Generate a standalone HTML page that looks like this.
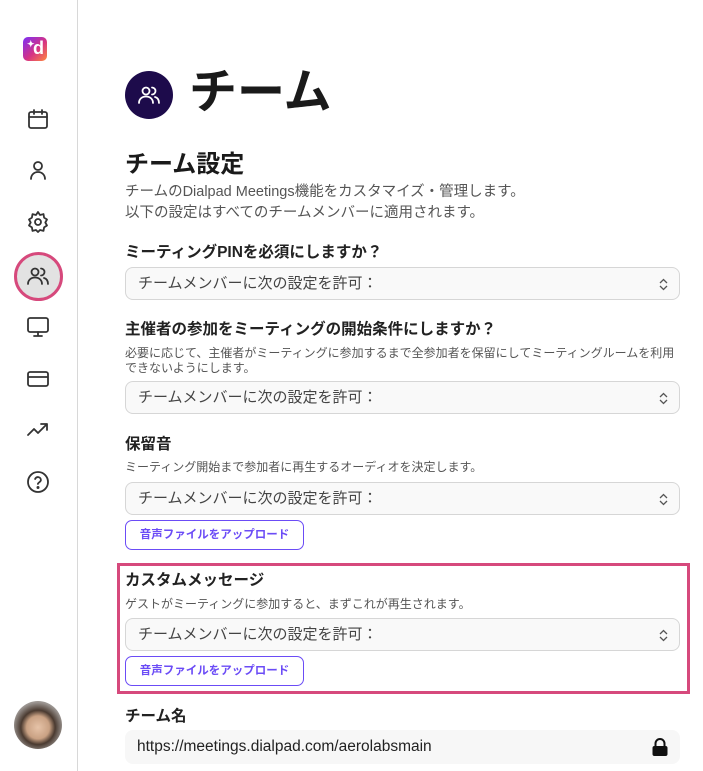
<!DOCTYPE html>
<html><head><meta charset="utf-8"><style>
*{box-sizing:border-box;margin:0;padding:0}
body{width:703px;height:771px;overflow:hidden;background:#fff;font-family:"Liberation Sans","Noto Sans CJK JP",sans-serif;color:#222;position:relative}
.side{position:absolute;left:0;top:0;width:78px;height:771px;border-right:1px solid #d8d8d8;background:#fff}
.ic{position:absolute;left:26px;width:24px;height:24px}
.a{position:absolute;white-space:nowrap}
.lbl{font-size:15.5px;font-weight:bold;color:#222;left:125px}
.ds{font-size:12px;color:#555;left:125px;line-height:15px}
.sel{position:absolute;left:125px;width:555px;height:33px;border:1px solid #d6d6d6;border-radius:8px;background:#f9f9f9;font-size:15px;color:#444;padding-left:12px;line-height:31px}
.chev{position:absolute;right:11px;top:10px}
.btn{position:absolute;left:125px;width:179px;height:30px;border:1px solid #6b4cf6;border-radius:7px;color:#6b4cf6;font-size:11.5px;font-weight:bold;text-align:center;line-height:28px}
</style></head><body>
<div class="side">
  <div style="position:absolute;left:23px;top:37px;width:24px;height:24px;border-radius:5px;background:linear-gradient(135deg,#7b2ff7 0%,#d63384 55%,#ff8a3d 100%);color:#fff;font-weight:bold;font-size:18px;line-height:22px;text-align:right;padding-right:3px">d<span style="position:absolute;left:4px;top:-4px;font-size:9px">✦</span></div>
  <svg class="ic" style="top:107px" viewBox="0 0 24 24" fill="none" stroke="#333" stroke-width="1.8" stroke-linecap="round"><rect x="3" y="5" width="18" height="16" rx="2"/><path d="M3 10h18M8 3v4M16 3v4"/></svg>
  <svg class="ic" style="top:158px" viewBox="0 0 24 24" fill="none" stroke="#333" stroke-width="1.8" stroke-linecap="round"><circle cx="12" cy="8" r="4"/><path d="M5 21c0-4 3-7 7-7s7 3 7 7"/></svg>
  <svg class="ic" style="top:210px" viewBox="0 0 24 24" fill="none" stroke="#333" stroke-width="1.8" stroke-linejoin="round"><circle cx="12" cy="12" r="3"/><path d="M12 2l2 3 3.5-.9.6 3.5L21 9.5l-1.7 3 1.7 3-2.9 1.9-.6 3.5L14 20l-2 2-2-2-3.5.9-.6-3.5L3 15.5l1.7-3L3 9.5l2.9-1.9.6-3.5L10 5z"/></svg>
  <div style="position:absolute;left:14px;top:252px;width:49px;height:49px;border-radius:50%;background:#e2e2e2;border:3px solid #d6497c"></div>
  <svg class="ic" style="top:264px" viewBox="0 0 24 24" fill="none" stroke="#333" stroke-width="1.8" stroke-linecap="round"><circle cx="9" cy="8" r="3.5"/><path d="M2 20c0-4 3-6.5 7-6.5s7 2.5 7 6.5M15 4.5a3.5 3.5 0 0 1 0 7M18 14c2.5.7 4 3 4 6"/></svg>
  <svg class="ic" style="top:315px" viewBox="0 0 24 24" fill="none" stroke="#333" stroke-width="1.8" stroke-linecap="round"><rect x="2" y="3" width="20" height="14" rx="2"/><path d="M12 17v4M8 21h8"/></svg>
  <svg class="ic" style="top:367px" viewBox="0 0 24 24" fill="none" stroke="#333" stroke-width="1.8"><rect x="2" y="5" width="20" height="14" rx="2"/><path d="M2 10h20"/></svg>
  <svg class="ic" style="top:418px" viewBox="0 0 24 24" fill="none" stroke="#333" stroke-width="1.8" stroke-linecap="round" stroke-linejoin="round"><path d="M2 17l6-6 4 4 9-9M15 6h6v6"/></svg>
  <svg class="ic" style="top:470px" viewBox="0 0 24 24" fill="none" stroke="#333" stroke-width="1.8" stroke-linecap="round"><circle cx="12" cy="12" r="10"/><path d="M9.1 9a3 3 0 0 1 5.8 1c0 2-3 2.5-3 4"/><circle cx="12" cy="17.5" r=".6" fill="#333"/></svg>
  <div style="position:absolute;left:14px;top:701px;width:48px;height:48px;border-radius:50%;background:radial-gradient(circle at 50% 55%,#e6c3a8 0%,#c9a183 32%,#4a3a30 48%,#9a9490 70%,#c8c4c0 100%)"></div>
</div>

<div style="position:absolute;left:125px;top:71px;width:48px;height:48px;border-radius:50%;background:#1d0b4b"></div>
<svg style="position:absolute;left:137px;top:83px" width="24" height="24" viewBox="0 0 24 24" fill="none" stroke="#fff" stroke-width="1.8" stroke-linecap="round"><circle cx="9" cy="8" r="3.5"/><path d="M2 20c0-4 3-6.5 7-6.5s7 2.5 7 6.5M15 4.5a3.5 3.5 0 0 1 0 7M18 14c2.5.7 4 3 4 6"/></svg>
<div class="a" style="left:189px;top:63px;font-size:48px;font-weight:bold;color:#1a1a1a;line-height:60px">チーム</div>

<div class="a" style="left:125px;top:149px;font-size:24px;font-weight:bold;color:#1a1a1a;line-height:32px">チーム設定</div>
<div class="a" style="left:125px;top:182px;font-size:14.5px;color:#555;line-height:21px">チームのDialpad Meetings機能をカスタマイズ・管理します。<br>以下の設定はすべてのチームメンバーに適用されます。</div>

<div class="a lbl" style="top:240px">ミーティングPINを必須にしますか？</div>
<div class="sel" style="top:267px">チームメンバーに次の設定を許可：<svg class="chev" width="9" height="13" viewBox="0 0 9 13" fill="none" stroke="#555" stroke-width="1.3"><path d="M1 5l3.5-3.5L8 5M1 8l3.5 3.5L8 8"/></svg></div>

<div class="a lbl" style="top:317px">主催者の参加をミーティングの開始条件にしますか？</div>
<div class="a ds" style="top:346px">必要に応じて、主催者がミーティングに参加するまで全参加者を保留にしてミーティングルームを利用<br>できないようにします。</div>
<div class="sel" style="top:381px">チームメンバーに次の設定を許可：<svg class="chev" width="9" height="13" viewBox="0 0 9 13" fill="none" stroke="#555" stroke-width="1.3"><path d="M1 5l3.5-3.5L8 5M1 8l3.5 3.5L8 8"/></svg></div>

<div class="a lbl" style="top:432px">保留音</div>
<div class="a ds" style="top:460px">ミーティング開始まで参加者に再生するオーディオを決定します。</div>
<div class="sel" style="top:482px">チームメンバーに次の設定を許可：<svg class="chev" width="9" height="13" viewBox="0 0 9 13" fill="none" stroke="#555" stroke-width="1.3"><path d="M1 5l3.5-3.5L8 5M1 8l3.5 3.5L8 8"/></svg></div>
<div class="btn" style="top:520px">音声ファイルをアップロード</div>

<div style="position:absolute;left:117px;top:563px;width:573px;height:131px;border:3px solid #d6497c"></div>
<div class="a lbl" style="top:568px">カスタムメッセージ</div>
<div class="a ds" style="top:597px">ゲストがミーティングに参加すると、まずこれが再生されます。</div>
<div class="sel" style="top:618px">チームメンバーに次の設定を許可：<svg class="chev" width="9" height="13" viewBox="0 0 9 13" fill="none" stroke="#555" stroke-width="1.3"><path d="M1 5l3.5-3.5L8 5M1 8l3.5 3.5L8 8"/></svg></div>
<div class="btn" style="top:656px">音声ファイルをアップロード</div>

<div class="a lbl" style="top:704px">チーム名</div>
<div style="position:absolute;left:125px;top:730px;width:555px;height:34px;border-radius:8px;background:#f7f7f7;font-size:15.5px;color:#222;padding-left:12px;line-height:34px">https://meetings.dialpad.com/aerolabsmain
<svg style="position:absolute;right:11px;top:8px" width="18" height="19" viewBox="0 0 18 19"><path d="M4.5 8V5.5a4.5 4.5 0 0 1 9 0V8" fill="none" stroke="#111" stroke-width="2"/><rect x="1.5" y="8" width="15" height="10" rx="2" fill="#111"/></svg></div>
</body></html>
